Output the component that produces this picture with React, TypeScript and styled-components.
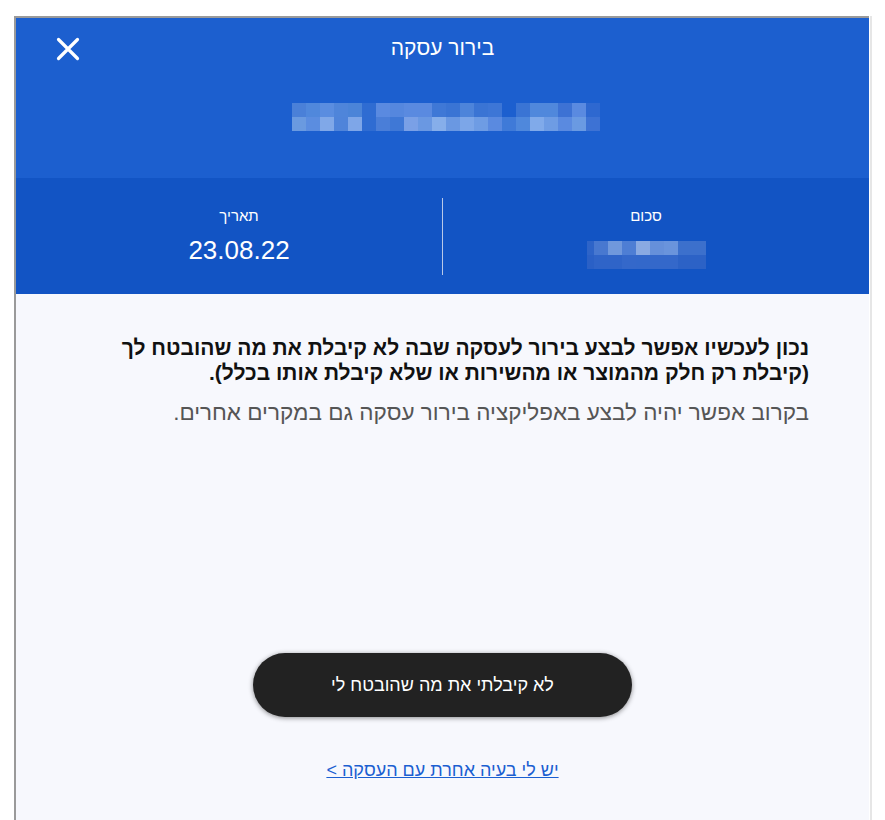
import React from 'react'
import styled, {createGlobalStyle} from 'styled-components'

const GlobalStyle = createGlobalStyle`
  html, body {
    margin: 0;
    padding: 0;
    background: #ffffff;
  }
  body {
    font-family: "Liberation Sans", "DejaVu Sans", sans-serif;
  }
`

// pixelated (blurred) placeholder blocks, colours picked off the screenshot
const nameBlur = [
  ['#4a80d8', '#5088dc', '#5a8de0', '#4f85da', '#4b84d8', '#2f6cd2', '#5a8ae0', '#5587de', '#5a8ae0', '#5a8ae0', '#3f78d6',
    '#3a74d4', '#4d84da', '#3a74d4', '#3d76d6', '#1c5fcf', '#3a74d4', '#5088dc', '#5088dc', '#3d72d4', '#5a8ae0', '#2e68d0'],
  ['#6a9ae0', '#5b8de0', '#80a8e8', '#4f84da', '#7ea6e8', '#2f6cd2', '#4a7ed8', '#3f78d6', '#7aa0e6', '#6a98e2', '#86aeea',
    '#6a98e2', '#7ca6e8', '#6e9ce4', '#5a8ae0', '#3f7ad8', '#4f88dc', '#80aaea', '#6e9ce4', '#5a8ae0', '#6a9ae2', '#3d72d4'],
]

const amountBlur = [
  ['#2e64c8', '#4878d0', '#7098dc', '#4e7ed4', '#8aaae2', '#6690da', '#6a94dc', '#3c70cc'],
  ['#2a60c6', '#2f64c8', '#2f64c8', '#3468ca', '#3368ca', '#3468ca', '#3468ca', '#2c62c6'],
]
const amountWidths = [7, 14, 14, 14, 14, 14, 14, 28]

const App = () => {
  return (
    <>
      <GlobalStyle />
      <Page>
        <Frame dir="rtl">
          <Header>
            <Title>בירור עסקה</Title>
            <CloseButton aria-label="close">
              <svg width="24" height="24" viewBox="0 0 24 24">
                <path d="M2.5 2.5 L21.5 21.5 M21.5 2.5 L2.5 21.5" stroke="#fff" strokeWidth="3.2" strokeLinecap="round" />
              </svg>
            </CloseButton>
            <NameBlur>
              {nameBlur.map((row, r) => (
                <BlurRow key={r}>
                  {row.map((c, i) => (
                    <Cell key={i} $c={c} $w={14} />
                  ))}
                </BlurRow>
              ))}
            </NameBlur>
          </Header>

          <Stats>
            <StatCol>
              <StatLabel>סכום</StatLabel>
              <AmountBlur>
                {amountBlur.map((row, r) => (
                  <BlurRow key={r}>
                    {row.map((c, i) => (
                      <Cell key={i} $c={c} $w={amountWidths[i]} />
                    ))}
                  </BlurRow>
                ))}
              </AmountBlur>
            </StatCol>
            <Divider />
            <StatCol>
              <StatLabel>תאריך</StatLabel>
              <StatValue>23.08.22</StatValue>
            </StatCol>
          </Stats>

          <Body>
            <Lead>
              נכון לעכשיו אפשר לבצע בירור לעסקה שבה לא קיבלת את מה שהובטח לך (קיבלת רק חלק מהמוצר או מהשירות או שלא קיבלת אותו בכלל).
            </Lead>
            <Note>בקרוב אפשר יהיה לבצע באפליקציה בירור עסקה גם במקרים אחרים.</Note>
            <Actions>
              <PrimaryButton>לא קיבלתי את מה שהובטח לי</PrimaryButton>
              <TextLink href="#">יש לי בעיה אחרת עם העסקה &gt;</TextLink>
            </Actions>
          </Body>
        </Frame>
      </Page>
    </>
  )
}

export default App

const Page = styled.div`
  padding: 16px 0 0 14px;
  height: 820px;
  box-sizing: border-box;
  overflow: hidden;
`

const Frame = styled.div`
  width: 853px;
  height: 820px;
  border-top: 2px solid #9a9a9a;
  border-left: 2px solid #9a9a9a;
  display: flex;
  flex-direction: column;
  background: #f7f8fd;
  box-shadow: 1px 0 0 #ffffff, 3px 0 0 #e6e6e6;
`

const Header = styled.div`
  position: relative;
  background: #1c5fcf;
  height: 160px;
  box-sizing: border-box;
  padding-top: 17px;
  display: flex;
  flex-direction: column;
  align-items: center;
`

const Title = styled.h1`
  margin: 0;
  font-size: 21px;
  line-height: 26px;
  font-weight: 400;
  color: #ffffff;
`

const CloseButton = styled.button`
  position: absolute;
  left: 40px;
  top: 19px;
  width: 24px;
  height: 24px;
  padding: 0;
  border: 0;
  background: none;
  display: flex;
`

const NameBlur = styled.div`
  direction: ltr;
  display: flex;
  flex-direction: column;
  margin: 42px 0 0 7px;
`

const AmountBlur = styled.div`
  direction: ltr;
  display: flex;
  flex-direction: column;
  margin-top: 16px;
`

const BlurRow = styled.div`
  display: flex;
  height: 14px;
`

const Cell = styled.span<{$c: string; $w: number}>`
  display: block;
  width: ${p => p.$w}px;
  height: 14px;
  background: ${p => p.$c};
`

const Stats = styled.div`
  background: #1254c4;
  height: 116px;
  padding: 20px 20px 19px;
  box-sizing: border-box;
  display: flex;
  align-items: stretch;
`

const StatCol = styled.div`
  flex: 1;
  display: flex;
  flex-direction: column;
  align-items: center;
  padding-top: 9px;
`

const Divider = styled.div`
  width: 1px;
  background: #b9c9e8;
`

const StatLabel = styled.div`
  color: #ffffff;
  font-size: 15px;
  line-height: 18px;
`

const StatValue = styled.div`
  color: #ffffff;
  font-size: 26px;
  line-height: 30px;
  margin-top: 10px;
`

const Body = styled.div`
  flex: 1;
  display: flex;
  flex-direction: column;
  padding: 41px 60px 0;
`

const Lead = styled.p`
  margin: 0;
  font-size: 21px;
  line-height: 25px;
  font-weight: 700;
  color: #111111;
`

const Note = styled.p`
  margin: 14px 0 0;
  font-size: 22.5px;
  line-height: 28px;
  font-weight: 400;
  color: #555555;
`

const Actions = styled.div`
  display: flex;
  flex-direction: column;
  align-items: center;
  margin-top: 226px;
  gap: 43px;
`

const PrimaryButton = styled.button`
  width: 379px;
  height: 64px;
  border: 0;
  border-radius: 32px;
  background: #222222;
  color: #ffffff;
  font-family: inherit;
  font-size: 18px;
  box-shadow: 0 1px 5px rgba(0, 0, 0, 0.45);
`

const TextLink = styled.a`
  color: #1b5fd1;
  font-size: 18px;
  text-decoration: underline;
`
